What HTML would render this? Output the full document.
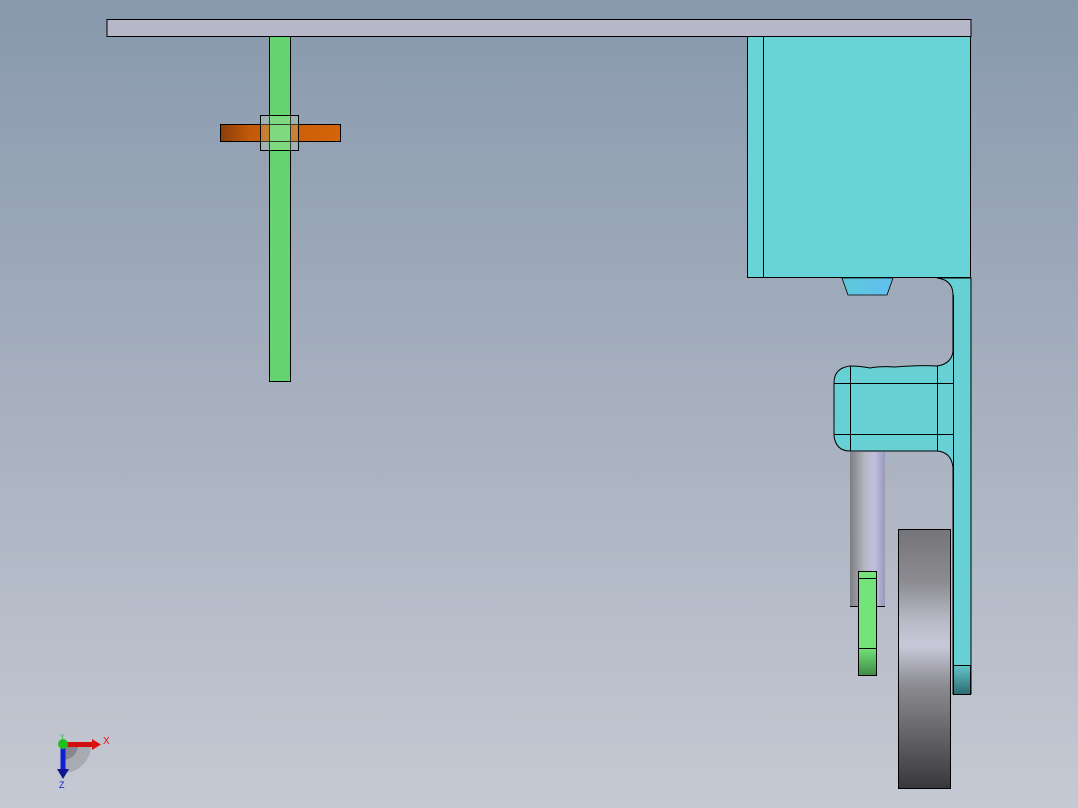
<!DOCTYPE html>
<html><head><style>html,body{margin:0;padding:0;width:1078px;height:808px;overflow:hidden}</style></head>
<body>
<svg width="1078" height="808" viewBox="0 0 1078 808" xmlns="http://www.w3.org/2000/svg">
<defs>
<linearGradient id="bg" x1="0" y1="0" x2="0" y2="1"><stop offset="0" stop-color="#8899ad"/><stop offset="0.5" stop-color="#a7b0bf"/><stop offset="1" stop-color="#c5c9d3"/></linearGradient>
<linearGradient id="or" x1="0" y1="0" x2="1" y2="0"><stop offset="0" stop-color="#8a3e0a"/><stop offset="0.25" stop-color="#c45a08"/><stop offset="1" stop-color="#d46408"/></linearGradient>
<linearGradient id="wh" x1="0" y1="0" x2="0" y2="1"><stop offset="0" stop-color="#757579"/><stop offset="0.2" stop-color="#8b8b90"/><stop offset="0.35" stop-color="#b9b9c6"/><stop offset="0.45" stop-color="#c9c8da"/><stop offset="0.6" stop-color="#8c8c91"/><stop offset="1" stop-color="#38383c"/></linearGradient>
<linearGradient id="sh" x1="0" y1="0" x2="1" y2="0"><stop offset="0" stop-color="#7d7d82"/><stop offset="0.4" stop-color="#b5b5c0"/><stop offset="0.7" stop-color="#c0c0e0"/><stop offset="1" stop-color="#9898b8"/></linearGradient>
<linearGradient id="cn" x1="0" y1="0" x2="1" y2="0"><stop offset="0" stop-color="#5ec8d8"/><stop offset="1" stop-color="#60c0f0"/></linearGradient>
<linearGradient id="gb" x1="0" y1="0" x2="0" y2="1"><stop offset="0" stop-color="#72e07a"/><stop offset="1" stop-color="#3f8a45"/></linearGradient>
<linearGradient id="cb" x1="0" y1="0" x2="0" y2="1"><stop offset="0" stop-color="#62c4c8"/><stop offset="1" stop-color="#2d6a72"/></linearGradient>
</defs>
<rect width="1078" height="808" fill="url(#bg)"/>
<rect x="107" y="19.5" width="864" height="17" fill="#b6b8c9" stroke="#000" stroke-width="1"/>
<rect x="269.5" y="36.5" width="21" height="345" fill="#66d46e" stroke="#000"/>
<rect x="220.5" y="124.5" width="120" height="17" fill="url(#or)" stroke="#000"/>
<rect x="269.5" y="124.5" width="21" height="17" fill="#66d46e" stroke="#000"/>
<rect x="260.5" y="115.5" width="38" height="35" fill="rgba(200,230,180,0.25)" stroke="#000"/>
<rect x="747.5" y="36.5" width="223" height="241" fill="#69d4d8" stroke="#000"/>
<line x1="763.5" y1="36" x2="763.5" y2="277" stroke="#000"/>
<path d="M842 278 L893 278 L887 295 L848 295 Z" fill="url(#cn)" stroke="#000" stroke-width="0.8"/>
<path d="M937 278 Q953 280 953 295 L953 352 Q951 364 937 366 Q920 365 895 367 Q880 366 870 368 Q860 366 850 366 Q834 368 834 383 L834 436 Q836 451 850 451 L937 451 Q951 452 953 467 L953 694 L971 694 L971 278 Z" fill="#67d0d4" stroke="#000"/>
<rect x="953.5" y="665.5" width="17" height="29" fill="url(#cb)" stroke="#000"/>
<line x1="953.5" y1="295" x2="953.5" y2="665" stroke="#000"/>
<line x1="834" y1="383.5" x2="953" y2="383.5" stroke="#000"/>
<line x1="834" y1="434.5" x2="953" y2="434.5" stroke="#000"/>
<line x1="850.5" y1="366" x2="850.5" y2="451" stroke="#000"/>
<line x1="937.5" y1="366" x2="937.5" y2="451" stroke="#000"/>
<rect x="850" y="452" width="35" height="154" fill="url(#sh)"/>
<line x1="850" y1="606.5" x2="885" y2="606.5" stroke="#000"/>
<rect x="858.5" y="571.5" width="18" height="104" fill="#72e47a" stroke="#000"/>
<rect x="858.5" y="648.5" width="18" height="27" fill="url(#gb)" stroke="#000"/>
<line x1="858" y1="578.5" x2="876" y2="578.5" stroke="#000"/>
<rect x="898.5" y="529.5" width="52" height="259" fill="url(#wh)" stroke="#000"/>
<path d="M63 745 L91 745 A28 28 0 0 1 63 773 Z" fill="#8a8a8e" opacity="0.45"/>
<path d="M63 745 L78 745 A15 15 0 0 1 63 760 Z" fill="#555" opacity="0.4"/>
<rect x="62" y="742" width="31" height="5" fill="#d01010"/>
<path d="M92 739 L101 744.5 L92 750 Z" fill="#e01010"/>
<rect x="60.5" y="745" width="5" height="26" fill="#1020d0"/>
<path d="M57 769 L69 769 L63 779 Z" fill="#101890"/>
<circle cx="63" cy="744" r="5" fill="#20c020"/>
<text x="103" y="744" font-family="Liberation Sans, sans-serif" font-size="10" fill="#e01010">X</text>
<text x="59" y="788" font-family="Liberation Sans, sans-serif" font-size="9" fill="#1020d0">Z</text>
<text x="60" y="739" font-family="Liberation Sans, sans-serif" font-size="7" fill="#20c020">Y</text>
</svg>
</body></html>
